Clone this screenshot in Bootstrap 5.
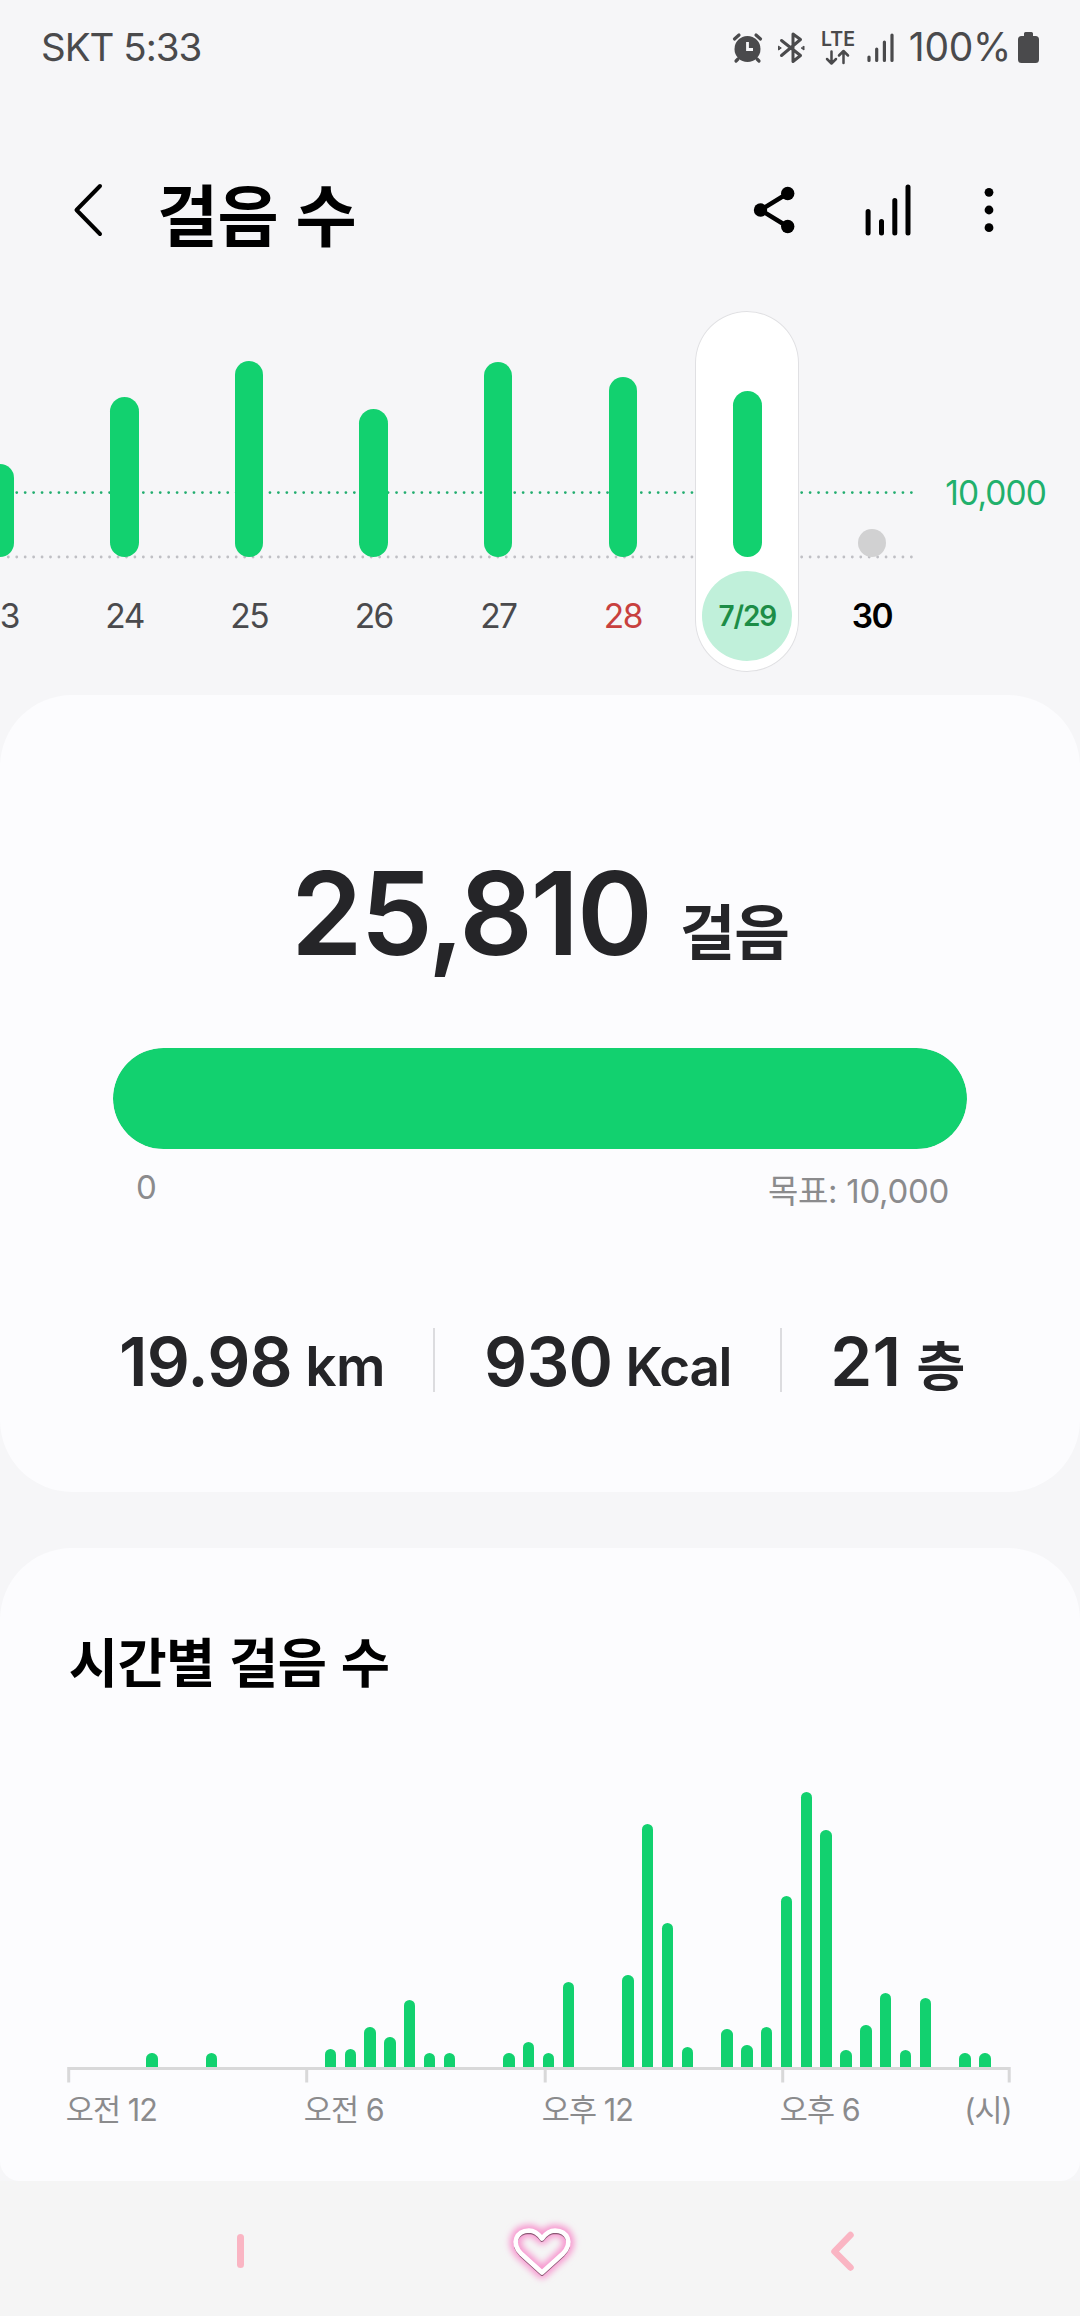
<!DOCTYPE html>
<html lang="ko">
<head>
<meta charset="utf-8">
<meta name="viewport" content="width=device-width, initial-scale=1">
<title>걸음 수</title>
<link rel="stylesheet" href="https://cdn.jsdelivr.net/npm/bootstrap@5.3.0/dist/css/bootstrap.min.css">
<style>
  :root { --steps: #12d16f; --panel: #fcfcfe; --page: #f6f6f8; }
  html, body { overflow: hidden; }
  body { width: 1080px; height: 2316px; background: var(--page); color: #252528;
    font-family: "Inter", "Noto Sans CJK KR", sans-serif; white-space: nowrap; }
  svg { display: block; flex: none; overflow: visible; }
  .statusbar { height: 94px; padding: 0 41px 0 41px; color: #4a4a4c; font-size: 38.5px; font-weight: 400; line-height: 94px; }
  .carrier { letter-spacing: -1px; }
  .percent { letter-spacing: -.3px; margin-left: 14px; font-size: 39px; }
  .battery { margin-left: 7px; }
  .appbar { height: 217px; padding: 0 70px 0 72px; color: #000; }
  .appbar-row { height: 68px; margin-top: 82px; }
  .page-title { font: 700 66.5px/68px "Noto Sans CJK KR", sans-serif; margin: 0 0 0 51px; padding-top: 4px; letter-spacing: -.8px; }
  .week { height: 384px; }
  .day { width: 124.57px; flex: none; height: 361px; font-size: 33.5px; color: #4a4a4d; }
  .day-track { height: 246px; }
  .day-bar { width: 28.4px; border-radius: 15px; background: var(--steps); }
  .day-label { height: 90px; width: 90px; margin-top: 14px; line-height: 90px; letter-spacing: -1.6px; }
  .day-on { width: 104px; margin: 0 10.28px; background: #fff; border-radius: 52px; box-shadow: inset 0 0 0 1px #e0e0e3; }
  .day-on .day-label { background: #c0f0da; border-radius: 50%; color: #1d8d47; font-weight: 600; font-size: 28px; letter-spacing: -1.1px; }
  .days { margin-left: -62.3px; position: relative; }
  .rules { position: absolute; left: 0; top: 0; }
  .goal { color: #21b06c; font-size: 33.5px; line-height: 50px; margin: 157px 34px 0 auto; letter-spacing: -.9px; }
  .panel { background: var(--panel); border-radius: 72px; border: 0; }
  .summary { height: 797px; padding: 167px 113px 0; }
  .total { font-size: 115px; line-height: 104px; font-weight: 600; letter-spacing: -2.2px; }
  .total-unit { font-size: 60.5px; margin-left: 29px; letter-spacing: -1px; font-family: "Noto Sans CJK KR", sans-serif; font-weight: 700; }
  .meter { height: 101px; border-radius: 51px; background: #e6e6e9; margin-top: 67px; }
  .meter .progress-bar { background: var(--steps); border-radius: 51px; }
  .scale { color: #8b8b8d; font-size: 33px; line-height: 40px; padding: 18px 18px 0 23px; font-weight: 400; letter-spacing: -.3px; }
  .stats { margin-top: 104px; height: 98px; padding-left: 6px; padding-right: 3px; }
  .stat-num { font-size: 67.5px; font-weight: 600; line-height: 98px; letter-spacing: -.8px; word-spacing: -3px; }
  .stat-unit { font-size: 53px; font-weight: 600; letter-spacing: -1.3px; }
  .stat-unit.wide { font-size: 55px; letter-spacing: -.6px; }
  .stat-num.loose { letter-spacing: .2px; word-spacing: -2px; }
  .bar-v { width: 2px; height: 64px; background: #dcdcdf; margin-bottom: 8px; }
  .hourly { height: 633px; margin-top: 56px; padding: 81px 62px 0 62.8px; border-radius: 72px 72px 20px 20px; }
  .hourly-title { font: 700 53.5px/62px "Noto Sans CJK KR", sans-serif; color: #000; margin: 0 0 3px 6px; letter-spacing: -.6px; }
  .hours { height: 373px; width: 951.84px; }
  .hours span { flex: 1 1 0; display: flex; justify-content: center; align-items: flex-end; }
  .hours i { width: 11.4px; border-radius: 5.7px 5.7px 0 0; background: var(--steps); }
  .hour-labels { width: 946px; margin-left: 3px; color: #8b8b8d; font-size: 30.5px; line-height: 40px; margin-top: 7px; letter-spacing: -.9px; }
  .hour-labels .hour { width: 238px; flex: none; }
  .navkeys { height: 135px; background: #f5f5f5; }
</style>
<script src="https://cdn.jsdelivr.net/npm/bootstrap@5.3.0/dist/js/bootstrap.bundle.min.js"></script>
</head>
<body class="d-flex flex-column m-0">

<header class="statusbar d-flex align-items-center justify-content-between">
  <div class="carrier">SKT 5:33</div>
  <div class="d-flex align-items-center">
    <!-- alarm, bluetooth, LTE, signal -->
    <svg width="164" height="36" viewBox="732 29 164 36" fill="none" stroke="#4a4a4c" stroke-linecap="round" stroke-linejoin="round">
      <circle cx="748.5" cy="49" r="13" fill="#4a4a4c" stroke="none"/>
      <path d="M735.5 39l4.5-4M761.5 39l-4.500-4M739 59l-2 2M758 59l2 2" stroke-width="3.2"/>
      <path d="M748.500 42v7.500h5.500" stroke="#f6f6f8" stroke-width="2.800" stroke-linecap="butt" stroke-linejoin="miter"/>
      <path d="M782.500 40.500L801.500 55.500 794 61.500V34L801.500 39.500 782.500 55.500" stroke-width="3"/>
      <path d="M779.500 46.500v3.500l2.500-1.750zM805 46.500v3.500l-2.500-1.750z" fill="#4a4a4c" stroke-width="1"/>
      <text x="822" y="46" font-family="Inter" font-size="19.500" font-weight="600" fill="#4a4a4c" stroke="none" textLength="34">LTE</text>
      <path d="M832.500 51.500v11.500m-4.500-4l4.500 4.500 4.500-4.500M844.500 63V51.500m-4.500 4l4.500-4.500 4.500 4.500" stroke-width="2.500"/>
      <path d="M870 57v3.500M877.700 49v11.500M885.400 42v18.500M893 35v25.500" stroke-width="3.200"/>
    </svg>
    <div class="percent">100%</div>
    <svg class="battery" width="21" height="31" viewBox="0 0 21 31" fill="#4a4a4c"><path d="M7.500 0h6q1.500 0 1.500 1.500V4h2.500Q21 4 21 7.500v20q0 3.500-3.500 3.500h-14Q0 31 0 27.500v-20Q0 4 3.500 4H6V1.500Q6 0 7.500 0z"/></svg>
  </div>
</header>

<nav class="appbar">
  <div class="appbar-row d-flex align-items-center">
    <svg width="34" height="60" viewBox="72 180 34 60" fill="none" stroke="#000" stroke-width="4" stroke-linecap="round" stroke-linejoin="round"><path d="M100 186L76.500 210 100 234"/></svg>
    <h1 class="page-title">걸음 수</h1>
    <svg class="ms-auto" width="260" height="60" viewBox="750 180 260 60">
      <g stroke="#000" stroke-width="4.500" fill="none"><path d="M787.500 193.500L760.500 210l27 16.500"/></g>
      <circle cx="760.500" cy="210" r="6.700"/><circle cx="787.700" cy="193.500" r="6.700"/><circle cx="787.700" cy="226.500" r="6.700"/>
      <path d="M868.100 211.500v21.500M881.500 221.500v11.500M894.800 200.500v32.500M908 187v46" stroke="#000" stroke-width="5" stroke-linecap="round"/>
      <circle cx="989" cy="192.300" r="4.400"/><circle cx="989" cy="210" r="4.400"/><circle cx="989" cy="227.700" r="4.400"/>
    </svg>
  </div>
</nav>

<section class="week d-flex align-items-start position-relative">
  <svg class="rules" width="920" height="260" fill="none" stroke-width="2.800" stroke-linecap="round">
    <path d="M8.300 181.600H912" stroke="#22ad6f" stroke-dasharray="0.010 8.430"/>
    <path d="M8.300 246H912" stroke="#bfbfc4" stroke-dasharray="0.010 8.430"/>
  </svg>
  <div class="days d-flex">
    <div class="day d-flex flex-column align-items-center"><div class="day-track d-flex align-items-end"><div class="day-bar" style="height:93px"></div></div><div class="day-label text-center">23</div></div>
    <div class="day d-flex flex-column align-items-center"><div class="day-track d-flex align-items-end"><div class="day-bar" style="height:160.500px"></div></div><div class="day-label text-center">24</div></div>
    <div class="day d-flex flex-column align-items-center"><div class="day-track d-flex align-items-end"><div class="day-bar" style="height:196px"></div></div><div class="day-label text-center">25</div></div>
    <div class="day d-flex flex-column align-items-center"><div class="day-track d-flex align-items-end"><div class="day-bar" style="height:148px"></div></div><div class="day-label text-center">26</div></div>
    <div class="day d-flex flex-column align-items-center"><div class="day-track d-flex align-items-end"><div class="day-bar" style="height:195px"></div></div><div class="day-label text-center">27</div></div>
    <div class="day d-flex flex-column align-items-center"><div class="day-track d-flex align-items-end"><div class="day-bar" style="height:180px"></div></div><div class="day-label text-center" style="color:#c8403e">28</div></div>
    <div class="day day-on d-flex flex-column align-items-center"><div class="day-track d-flex align-items-end"><div class="day-bar" style="height:166px"></div></div><div class="day-label text-center">7/29</div></div>
    <div class="day d-flex flex-column align-items-center"><div class="day-track d-flex align-items-end"><div class="day-bar" style="height:28px;background:#d1d1d2"></div></div><div class="day-label text-center text-black fw-semibold">30</div></div>
  </div>
  <div class="goal">10,000</div>
</section>

<section class="panel summary">
  <div class="total d-flex align-items-baseline justify-content-center"><span>25,810</span><span class="total-unit">걸음</span></div>
  <div class="progress meter" role="progressbar"><div class="progress-bar" style="width:100%"></div></div>
  <div class="scale d-flex justify-content-between"><span>0</span><span class="pt-1">목표: 10,000</span></div>
  <div class="stats d-flex align-items-center justify-content-between">
    <div class="stat-num">19.98 <span class="stat-unit wide">km</span></div>
    <div class="bar-v"></div>
    <div class="stat-num">930 <span class="stat-unit">Kcal</span></div>
    <div class="bar-v"></div>
    <div class="stat-num loose">21 <span class="stat-unit">층</span></div>
  </div>
</section>

<section class="panel hourly">
  <h2 class="hourly-title">시간별 걸음 수</h2>
  <div class="hours d-flex">
    <span></span><span></span><span></span><span></span><span><i style="height:14px"></i></span><span></span><span></span><span><i style="height:14px"></i></span>
    <span></span><span></span><span></span><span></span><span></span><span><i style="height:18.300px"></i></span><span><i style="height:17.700px"></i></span><span><i style="height:40px"></i></span>
    <span><i style="height:29.700px"></i></span><span><i style="height:67px"></i></span><span><i style="height:14px"></i></span><span><i style="height:14px"></i></span><span></span><span></span><span><i style="height:14px"></i></span><span><i style="height:25px"></i></span>
    <span><i style="height:14px"></i></span><span><i style="height:85.300px"></i></span><span></span><span></span><span><i style="height:92px"></i></span><span><i style="height:243px"></i></span><span><i style="height:143.700px"></i></span><span><i style="height:20px"></i></span>
    <span></span><span><i style="height:38.300px"></i></span><span><i style="height:21.700px"></i></span><span><i style="height:40px"></i></span><span><i style="height:170.700px"></i></span><span><i style="height:275px"></i></span><span><i style="height:237px"></i></span><span><i style="height:17px"></i></span>
    <span><i style="height:42px"></i></span><span><i style="height:73.700px"></i></span><span><i style="height:17px"></i></span><span><i style="height:69px"></i></span><span></span><span><i style="height:14px"></i></span><span><i style="height:14px"></i></span><span></span>
  </div>
  <svg width="948" height="16" fill="#d8d8d9"><path d="M4.200 0h943.500v15.500h-3V3H721.200v12.500h-3V3H483.700v12.500h-3V3H245.200v12.500h-3V3H7.200v12.500h-3z"/></svg>
  <div class="hour-labels d-flex"><div class="hour">오전 12</div><div class="hour">오전 6</div><div class="hour">오후 12</div><div>오후 6</div><div class="ms-auto">(시)</div></div>
</section>

<footer class="navkeys d-flex">
  <svg width="1080" height="135" viewBox="0 2181 1080 135" fill="none" stroke-linecap="round" stroke-linejoin="round">
    <defs><filter id="glow" x="-40%" y="-40%" width="180%" height="180%"><feGaussianBlur stdDeviation="3.2"/></filter></defs>
    <path d="M240.500 2237.500v27" stroke="#fab5c3" stroke-width="7"/>
    <path d="M542 2272.500L521 2253.500C511 2243 516 2231 529 2230.500 535 2230.500 539 2234.500 542 2238.500 545 2234.500 549 2230.500 555 2230.500 568 2231 573 2243 563 2253.500z" stroke="#f79ad0" stroke-width="12" filter="url(#glow)"/>
    <path d="M542 2274L521 2255C511 2244.500 516 2232.500 529 2232 535 2232 539 2236 542 2240 545 2236 549 2232 555 2232 568 2232.500 573 2244.500 563 2255z" stroke="#8b5874" stroke-width="3.800"/>
    <path d="M542 2272.500L521 2253.500C511 2243 516 2231 529 2230.500 535 2230.500 539 2234.500 542 2238.500 545 2234.500 549 2230.500 555 2230.500 568 2231 573 2243 563 2253.500z" stroke="#fff" stroke-width="4.600"/>
    <path d="M850.500 2235L834.500 2251.500l16 16" stroke="#fab5c3" stroke-width="6.500"/>
  </svg>
</footer>
</body>
</html>
